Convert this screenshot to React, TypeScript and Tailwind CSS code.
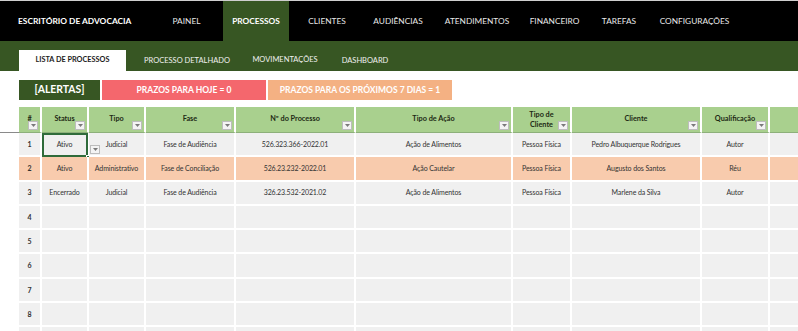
import React from "react";

const navItems: { label: string; w: number; active?: boolean }[] = [
  { label: "PAINEL", w: 73 },
  { label: "PROCESSOS", w: 66, active: true },
  { label: "CLIENTES", w: 76 },
  { label: "AUDIÊNCIAS", w: 66 },
  { label: "ATENDIMENTOS", w: 92 },
  { label: "FINANCEIRO", w: 63 },
  { label: "TAREFAS", w: 66 },
  { label: "CONFIGURAÇÕES", w: 85 },
];

const cols: { label: React.ReactNode; w: number }[] = [
  { label: "#", w: 23 },
  { label: "Status", w: 47 },
  { label: "Tipo", w: 57 },
  { label: "Fase", w: 90 },
  { label: "Nº do Processo", w: 120 },
  { label: "Tipo de Ação", w: 157 },
  { label: (<span className="leading-[10px]">Tipo de<br />Cliente</span>), w: 59 },
  { label: "Cliente", w: 130 },
  { label: "Qualificação", w: 68 },
];

const rows: string[][] = [
  ["1", "Ativo", "Judicial", "Fase de Audiência", "526.323.366-2022.01", "Ação de Alimentos", "Pessoa Física", "Pedro Albuquerque Rodrigues", "Autor"],
  ["2", "Ativo", "Administrativo", "Fase de Conciliação", "526.23.232-2022.01", "Ação Cautelar", "Pessoa Física", "Augusto dos Santos", "Réu"],
  ["3", "Encerrado", "Judicial", "Fase de Audiência", "326.23.532-2021.02", "Ação de Alimentos", "Pessoa Física", "Marlene da Silva", "Autor"],
  ["4", "", "", "", "", "", "", "", ""],
  ["5", "", "", "", "", "", "", "", ""],
  ["6", "", "", "", "", "", "", "", ""],
  ["7", "", "", "", "", "", "", "", ""],
  ["8", "", "", "", "", "", "", "", ""],
  ["", "", "", "", "", "", "", "", ""],
];

function DropBtn({ className }: { className: string }) {
  return (
    <div className={`absolute w-[10px] h-[9px] bg-[#f4f4f4] border border-[#bdbdbd] flex items-center justify-center ${className}`}>
      <svg width="5" height="3" viewBox="0 0 5 3">
        <path d="M0 0H5L2.5 3Z" fill="#7a7a7a" />
      </svg>
    </div>
  );
}

export default function App() {
  return (
    <div className="w-[798px] h-[331px] overflow-hidden bg-white font-['Lato','Liberation_Sans',sans-serif]">
      {/* top nav */}
      <div className="h-[41px] bg-black border-t border-[#cfcfcf] flex items-stretch text-[8.3px] text-white">
        <div className="w-[150px] pl-[18px] flex items-center font-bold text-[8.4px]">ESCRITÓRIO DE ADVOCACIA</div>
        {navItems.map((n) => (
          <div
            key={n.label}
            style={{ width: n.w }}
            className={n.active ? "flex items-center justify-center bg-[#375623] font-bold" : "flex items-center justify-center text-[#e8e8e8]"}
          >
            {n.label}
          </div>
        ))}
      </div>
      {/* sub nav */}
      <div className="h-[30px] bg-[#375623] flex items-end pl-[19px] text-[7.5px]">
        <div className="w-[107px] h-[21px] bg-white flex items-center justify-center font-bold text-[7.3px] text-[#1c1c1c]">LISTA DE PROCESSOS</div>
        <div className="w-[122px] h-[21px] flex items-center justify-center text-[#f0f0f0]">PROCESSO DETALHADO</div>
        <div className="w-[74px] h-[21px] flex items-center justify-center text-[#f0f0f0] pb-[2px]">MOVIMENTAÇÕES</div>
        <div className="w-[86px] h-[21px] flex items-center justify-center text-[#f0f0f0]">DASHBOARD</div>
      </div>
      {/* alerts */}
      <div className="mt-[9px] ml-[19px] h-[20px] flex gap-[2px]">
        <div className="w-[81px] bg-[#375623] text-white font-bold text-[10.4px] flex items-center justify-center">[ALERTAS]</div>
        <div className="w-[164px] bg-[#f4676d] text-white font-bold text-[8.5px] flex items-center justify-center">PRAZOS PARA HOJE = 0</div>
        <div className="w-[184px] bg-[#f4b183] text-white font-bold text-[8.5px] flex items-center justify-center">PRAZOS PARA OS PRÓXIMOS 7 DIAS = 1</div>
      </div>
      {/* table */}
      <div className="mt-[7px]">
        <div className="flex h-[26px]">
          <div className="w-[19px] border-b border-[#8a8a8a]" />
          {cols.map((c, i) => (
            <div
              key={i}
              style={{ width: c.w }}
              className="relative box-border border-r-2 border-b border-r-white border-b-[#8db07a] bg-[#a9d08e] flex items-center justify-center text-center font-bold text-[7.3px] text-[#1d2a14]"
            >
              {c.label}
              <DropBtn className="right-[2px] bottom-[2px]" />
            </div>
          ))}
          <div className="flex-1 bg-[#a9d08e] border-b border-[#8db07a]" />
        </div>
        {rows.map((r, ri) => {
          const peach = ri === 1;
          const bg = peach ? "bg-[#f8cbad]" : "bg-[#f0f0f0]";
          return (
            <div key={ri} className="flex h-[24.3px]">
              <div className="w-[19px]" />
              {cols.map((c, ci) => (
                <div
                  key={ci}
                  style={{ width: c.w }}
                  className={`relative box-border border-r-2 border-b-2 border-white ${bg} flex items-center justify-center text-[7px] tracking-[-0.1px] text-[#333] whitespace-nowrap ${ci === 0 ? "font-bold text-[#222]" : ""}`}
                >
                  {r[ci]}
                  {ri === 0 && ci === 1 && (
                    <>
                      <div className="absolute left-0 top-0 right-[-1px] bottom-[-2px] border-2 border-[#2f6b3a]" />
                      <div className="absolute right-[-4px] bottom-[-5px] w-[5px] h-[5px] bg-[#2f6b3a] border border-white" />
                    </>
                  )}
                  {ri === 0 && ci === 2 && <DropBtn className="left-[1px] bottom-[1px]" />}
                </div>
              ))}
              <div className={`flex-1 border-b-2 border-white ${bg}`} />
            </div>
          );
        })}
      </div>
    </div>
  );
}
